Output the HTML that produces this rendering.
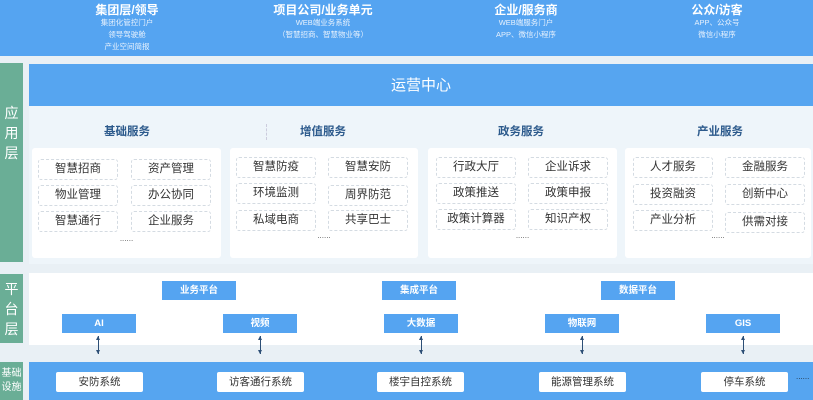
<!DOCTYPE html>
<html><head><meta charset="utf-8"><style>
*{margin:0;padding:0;box-sizing:border-box}
body{width:813px;height:400px;overflow:hidden;background:#e9f0f5;font-family:"Liberation Sans","Noto Sans CJK SC",sans-serif;position:relative}
.a{position:absolute}
.top{left:0;top:0;width:813px;height:56px;background:#55a4f1;color:#fff;text-align:center}
.top .c{position:absolute;top:4px;width:160px;margin-left:-80px;line-height:1}
.top b{font-size:12px;display:block;margin-bottom:1px}
.top span{font-size:7.5px;display:block;line-height:12px;color:#e6f1fd}
.g{background:#6aae96;color:#fff;left:0;width:23px;display:flex;flex-direction:column;align-items:center;font-size:14px;line-height:20px}
.ops{left:29px;top:64px;width:784px;height:42px;background:#56a5f0;color:#fff;font-size:15px;text-align:center;line-height:44px}
.pan{left:29px;top:106px;width:784px;height:158px;background:#eef5fa}
.h{top:123px;font-size:11.5px;font-weight:bold;color:#2c5a8c;width:120px;margin-left:-60px;text-align:center}
.card{background:#fff;top:148px;height:110px;border-radius:3px}
.it{position:absolute;width:80px;height:21px;border:1px dashed #d4dbe2;border-radius:3px;font-size:11.5px;color:#333;text-align:center;line-height:19px}
.dots{position:absolute;font-size:8px;color:#555;top:87px;width:100%;text-align:center}
.plat{left:29px;top:273px;width:784px;height:72px;background:#fff}
.pb{background:#55a4f1;color:#fff;font-size:9.5px;font-weight:bold;text-align:center;width:74px;height:19px;line-height:19px}
.arr{width:1px;height:18px;background:#2d4f76;top:336px}
.arr:before,.arr:after{content:"";position:absolute;left:-2px;border-left:2.5px solid transparent;border-right:2.5px solid transparent}
.arr:before{top:0;border-bottom:4px solid #2d4f76}
.arr:after{bottom:0;border-top:4px solid #2d4f76}
.bot{left:29px;top:362px;width:784px;height:38px;background:#56a5f0}
.bb{background:#fff;top:372px;width:87px;height:20px;border-radius:2px;font-size:10.5px;color:#333;text-align:center;line-height:20px}
</style></head><body>
<div class="a top">
<div class="c" style="left:127px"><b>集团层/领导</b><span>集团化管控门户</span><span>领导驾驶舱</span><span>产业空间简报</span></div>
<div class="c" style="left:323px"><b>项目公司/业务单元</b><span>WEB端业务系统</span><span>（智慧招商、智慧物业等）</span></div>
<div class="c" style="left:526px"><b>企业/服务商</b><span>WEB端服务门户</span><span>APP、微信小程序</span></div>
<div class="c" style="left:717px"><b>公众/访客</b><span>APP、公众号</span><span>微信小程序</span></div>
</div>
<div class="a g" style="top:63px;height:199px;justify-content:flex-start;padding-top:40px"><div>应</div><div>用</div><div>层</div></div>
<div class="a g" style="top:274px;height:69px;justify-content:center"><div>平</div><div>台</div><div>层</div></div>
<div class="a g" style="top:362px;height:38px;justify-content:center;font-size:10px;line-height:14px"><div>基础</div><div>设施</div></div>
<div class="a ops">运营中心</div>
<div class="a pan"></div>
<div class="a" style="left:266px;top:124px;height:16px;border-left:1px dashed #ccd"></div>
<div class="a h" style="left:127px">基础服务</div>
<div class="a h" style="left:323px">增值服务</div>
<div class="a h" style="left:521px">政务服务</div>
<div class="a h" style="left:720px">产业服务</div>

<div class="a card" style="left:32px;width:189px">
<div class="it" style="left:6px;top:11px">智慧招商</div><div class="it" style="left:99px;top:11px">资产管理</div>
<div class="it" style="left:6px;top:37px">物业管理</div><div class="it" style="left:99px;top:37px">办公协同</div>
<div class="it" style="left:6px;top:63px">智慧通行</div><div class="it" style="left:99px;top:63px">企业服务</div>
<div class="dots" style="top:86px">......</div></div>
<div class="a card" style="left:230px;width:188px">
<div class="it" style="left:6px;top:9px">智慧防疫</div><div class="it" style="left:98px;top:9px">智慧安防</div>
<div class="it" style="left:6px;top:35px">环境监测</div><div class="it" style="left:98px;top:37px">周界防范</div>
<div class="it" style="left:6px;top:62px">私域电商</div><div class="it" style="left:98px;top:62px">共享巴士</div>
<div class="dots" style="top:83px">......</div></div>
<div class="a card" style="left:428px;width:189px">
<div class="it" style="left:8px;top:9px">行政大厅</div><div class="it" style="left:100px;top:9px">企业诉求</div>
<div class="it" style="left:8px;top:35px">政策推送</div><div class="it" style="left:100px;top:35px">政策申报</div>
<div class="it" style="left:8px;top:61px">政策计算器</div><div class="it" style="left:100px;top:61px">知识产权</div>
<div class="dots" style="top:83px">......</div></div>
<div class="a card" style="left:625px;width:186px">
<div class="it" style="left:8px;top:9px">人才服务</div><div class="it" style="left:100px;top:9px">金融服务</div>
<div class="it" style="left:8px;top:36px">投资融资</div><div class="it" style="left:100px;top:36px">创新中心</div>
<div class="it" style="left:8px;top:62px">产业分析</div><div class="it" style="left:100px;top:64px">供需对接</div>
<div class="dots" style="top:83px">......</div></div>

<div class="a plat"></div>
<div class="a pb" style="left:162px;top:281px">业务平台</div>
<div class="a pb" style="left:382px;top:281px">集成平台</div>
<div class="a pb" style="left:601px;top:281px">数据平台</div>
<div class="a pb" style="left:62px;top:314px">AI</div>
<div class="a pb" style="left:223px;top:314px">视频</div>
<div class="a pb" style="left:384px;top:314px">大数据</div>
<div class="a pb" style="left:545px;top:314px">物联网</div>
<div class="a pb" style="left:706px;top:314px">GIS</div>
<div class="a arr" style="left:98px"></div>
<div class="a arr" style="left:260px"></div>
<div class="a arr" style="left:421px"></div>
<div class="a arr" style="left:582px"></div>
<div class="a arr" style="left:743px"></div>

<div class="a bot"></div>
<div class="a bb" style="left:56px">安防系统</div>
<div class="a bb" style="left:217px">访客通行系统</div>
<div class="a bb" style="left:377px">楼宇自控系统</div>
<div class="a bb" style="left:539px">能源管理系统</div>
<div class="a bb" style="left:701px">停车系统</div>
<div class="a" style="left:796px;top:372px;font-size:8px;color:#234">......</div>
</body></html>
